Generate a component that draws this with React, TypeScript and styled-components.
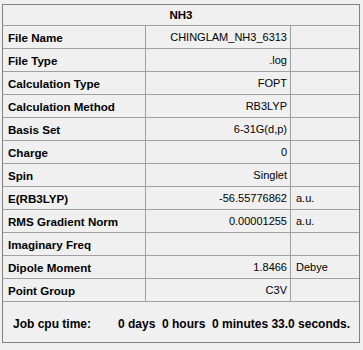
import styled, { createGlobalStyle } from "styled-components";

const GlobalStyle = createGlobalStyle`
   html, body {
      margin: 0;
      padding: 0;
      background: #f0f0f0;
   }
   body {
      font-family: "Liberation Sans", Arial, sans-serif;
      font-size: 11px;
      color: #000;
   }
`;

const Frame = styled.div`
   margin: 4px 0 0 2px;
   width: 358px;
   box-sizing: border-box;
   border: 1px solid #828282;
   background: #f0f0f0;
`;

const Title = styled.div`
   height: 20px;
   border-bottom: 1px solid #a0a0a0;
   display: flex;
   align-items: center;
   justify-content: center;
   font-weight: bold;
   font-size: 11.5px;
`;

const Row = styled.div`
   display: grid;
   grid-template-columns: 143px 145px 1fr;
   height: 22px;
   border-bottom: 1px solid #a0a0a0;
`;

const Cell = styled.div<{ $align?: "left" | "right"; $bold?: boolean; $last?: boolean }>`
   display: flex;
   align-items: center;
   justify-content: ${(p) => (p.$align === "right" ? "flex-end" : "flex-start")};
   padding: ${(p) => (p.$align === "right" ? "0 3px 0 0" : "0 0 0 5px")};
   font-weight: ${(p) => (p.$bold ? "bold" : "normal")};
   font-size: ${(p) => (p.$bold ? "11.6px" : "11px")};
   border-right: ${(p) => (p.$last ? "none" : "1px solid #a0a0a0")};
   white-space: nowrap;
   overflow: hidden;
`;

const Footer = styled.div`
   height: 40px;
   display: flex;
   align-items: center;
   padding-left: 10px;
   padding-top: 3px;
   box-sizing: border-box;
   font-weight: bold;
   font-size: 12px;
   white-space: pre;
`;

const FooterLabel = styled.span`
   width: 105px;
`;

type Prop = { label: string; value: string; unit?: string };

const props: Prop[] = [
   { label: "File Name", value: "CHINGLAM_NH3_6313" },
   { label: "File Type", value: ".log" },
   { label: "Calculation Type", value: "FOPT" },
   { label: "Calculation Method", value: "RB3LYP" },
   { label: "Basis Set", value: "6-31G(d,p)" },
   { label: "Charge", value: "0" },
   { label: "Spin", value: "Singlet" },
   { label: "E(RB3LYP)", value: "-56.55776862", unit: "a.u." },
   { label: "RMS Gradient Norm", value: "0.00001255", unit: "a.u." },
   { label: "Imaginary Freq", value: "" },
   { label: "Dipole Moment", value: "1.8466", unit: "Debye" },
   { label: "Point Group", value: "C3V" },
];

const App = () => {
   return (
      <>
         <GlobalStyle />
         <Frame>
            <Title>NH3</Title>
            {props.map((p) => (
               <Row key={p.label}>
                  <Cell $bold>{p.label}</Cell>
                  <Cell $align="right">{p.value}</Cell>
                  <Cell $last>{p.unit}</Cell>
               </Row>
            ))}
            <Footer>
               <FooterLabel>Job cpu time:</FooterLabel>
               <span>0 days  0 hours  0 minutes 33.0 seconds.</span>
            </Footer>
         </Frame>
      </>
   );
};

export default App;
